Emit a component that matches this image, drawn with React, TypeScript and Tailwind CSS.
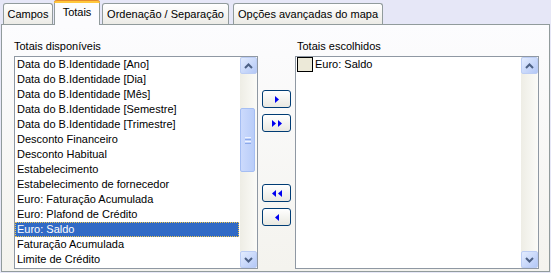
import React from "react";

const leftItems = [
  "Data do B.Identidade [Ano]",
  "Data do B.Identidade [Dia]",
  "Data do B.Identidade [Mês]",
  "Data do B.Identidade [Semestre]",
  "Data do B.Identidade [Trimestre]",
  "Desconto Financeiro",
  "Desconto Habitual",
  "Estabelecimento",
  "Estabelecimento de fornecedor",
  "Euro: Faturação Acumulada",
  "Euro: Plafond de Crédito",
  "Euro: Saldo",
  "Faturação Acumulada",
  "Limite de Crédito",
];

function ArrowBtn({ dir }: { dir: "up" | "down" }) {
  return (
    <div className="h-[17px] w-[17px] rounded-[2px] border border-[#BCCDF4] bg-gradient-to-br from-[#E3ECFE] to-[#B4C8F6] flex items-center justify-center">
      <svg width="9" height="6" viewBox="0 0 9 6">
        {dir === "up" ? (
          <polyline points="1,5 4.5,1.5 8,5" fill="none" stroke="#4D6185" strokeWidth="2" />
        ) : (
          <polyline points="1,1 4.5,4.5 8,1" fill="none" stroke="#4D6185" strokeWidth="2" />
        )}
      </svg>
    </div>
  );
}

function ScrollBar({ thumb }: { thumb: boolean }) {
  return (
    <div className="w-[17px] flex flex-col bg-gradient-to-r from-[#EEEDE5] to-[#FBFBF8]">
      <ArrowBtn dir="up" />
      <div className="flex-1 flex flex-col">
        {thumb && (
          <>
            <div className="h-[34px]" />
            <div className="h-[64px] w-[15px] rounded-[2px] border border-[#A5BEF3] bg-gradient-to-r from-[#CCDAFC] to-[#B9CDF9] flex flex-col items-center justify-center gap-[1px]">
              <div className="h-[1px] w-[6px] bg-[#EEF3FE]" />
              <div className="h-[1px] w-[6px] bg-[#8CA9EA]" />
              <div className="h-[1px] w-[6px] bg-[#EEF3FE]" />
              <div className="h-[1px] w-[6px] bg-[#8CA9EA]" />
            </div>
          </>
        )}
      </div>
      <ArrowBtn dir="down" />
    </div>
  );
}

function Tri({ dir }: { dir: "l" | "r" }) {
  return (
    <svg width="4" height="7" viewBox="0 0 4 7">
      {dir === "r" ? (
        <polygon points="0,0 4,3.5 0,7" fill="#0000F0" />
      ) : (
        <polygon points="4,0 0,3.5 4,7" fill="#0000F0" />
      )}
    </svg>
  );
}

function MoveBtn({ children, className = "" }: { children: React.ReactNode; className?: string }) {
  return (
    <div
      className={
        "h-[18px] w-[29px] rounded-[3px] border border-[#003C74] bg-gradient-to-b from-[#FFFFFF] to-[#E9E8E1] flex items-center justify-center gap-[2px] " +
        className
      }
    >
      {children}
    </div>
  );
}

export default function App() {
  return (
    <div className="w-[551px] h-[273px] bg-[#E6E7F7] overflow-hidden text-[11px] text-black [font-family:'Liberation_Sans',Arial,sans-serif]">
      {/* Tabs */}
      <div className="flex items-end h-[24px]">
        <div className="ml-[3px] w-[50px] h-[21px] rounded-t-[3px] border border-b-0 border-[#919B9C] bg-gradient-to-b from-[#FFFFFF] to-[#ECEBE6] flex items-center justify-center leading-[13px] pt-[1px]">
          Campos
        </div>
        <div className="ml-[1px] w-[46px] h-[25px] -mb-[1px] relative z-10 rounded-t-[3px] border-x border-[#919B9C] bg-[#FCFCFE] flex flex-col">
          <div className="h-[3px] -mx-[1px] rounded-t-[3px] bg-[#FFC83C] border-t border-[#E68B2C]" />
          <div className="flex-1 flex items-start justify-center pt-[3px] leading-[13px]">Totais</div>
        </div>
        <div className="ml-[2px] w-[127px] h-[21px] rounded-t-[3px] border border-b-0 border-[#919B9C] bg-gradient-to-b from-[#FFFFFF] to-[#ECEBE6] flex items-center justify-center leading-[13px] pt-[1px]">
          Ordenação / Separação
        </div>
        <div className="ml-[4px] w-[150px] h-[21px] rounded-t-[3px] border border-b-0 border-[#919B9C] bg-gradient-to-b from-[#FFFFFF] to-[#ECEBE6] flex items-center justify-center leading-[13px] pt-[1px]">
          Opções avançadas do mapa
        </div>
      </div>

      {/* Panel */}
      <div className="ml-[1px] w-[549px] h-[248px] border border-[#919B9C] bg-gradient-to-b from-[#FCFCFE] to-[#F4F3EE] pt-[15px] pl-[12px] flex">
        {/* Left column */}
        <div className="w-[244px] flex flex-col">
          <div className="leading-[13px] h-[13px] mb-[3px]">Totais disponíveis</div>
          <div className="h-[213px] border border-[#8F98A3] bg-white flex">
            <div className="flex-1 flex flex-col">
              {leftItems.map((t) => {
                const sel = t === "Euro: Saldo";
                return (
                  <div
                    key={t}
                    className={
                      "h-[15px] leading-[15px] pl-[2px] whitespace-nowrap " +
                      (sel ? "bg-[#316AC5] text-white outline outline-1 outline-dotted outline-[#F0C850] -outline-offset-1 mr-[1px]" : "")
                    }
                  >
                    {t}
                  </div>
                );
              })}
            </div>
            <ScrollBar thumb={true} />
          </div>
        </div>

        {/* Middle buttons */}
        <div className="w-[29px] mx-[4px] flex flex-col pt-[50px]">
          <MoveBtn>
            <Tri dir="r" />
          </MoveBtn>
          <MoveBtn className="mt-[6px]">
            <Tri dir="r" />
            <Tri dir="r" />
          </MoveBtn>
          <MoveBtn className="mt-[52px]">
            <Tri dir="l" />
            <Tri dir="l" />
          </MoveBtn>
          <MoveBtn className="mt-[6px]">
            <Tri dir="l" />
          </MoveBtn>
        </div>

        {/* Right column */}
        <div className="w-[244px] flex flex-col">
          <div className="leading-[13px] h-[13px] mb-[3px] pl-[2px]">Totais escolhidos</div>
          <div className="h-[213px] border border-[#8F98A3] bg-white flex">
            <div className="flex-1 flex flex-col">
              <div className="h-[15px] flex items-center pl-[1px]">
                <div className="w-[16px] h-[15px] border border-black bg-[#ECE9D8]" />
                <span className="pl-[2px] leading-[15px]">Euro: Saldo</span>
              </div>
            </div>
            <ScrollBar thumb={false} />
          </div>
        </div>
      </div>
    </div>
  );
}
